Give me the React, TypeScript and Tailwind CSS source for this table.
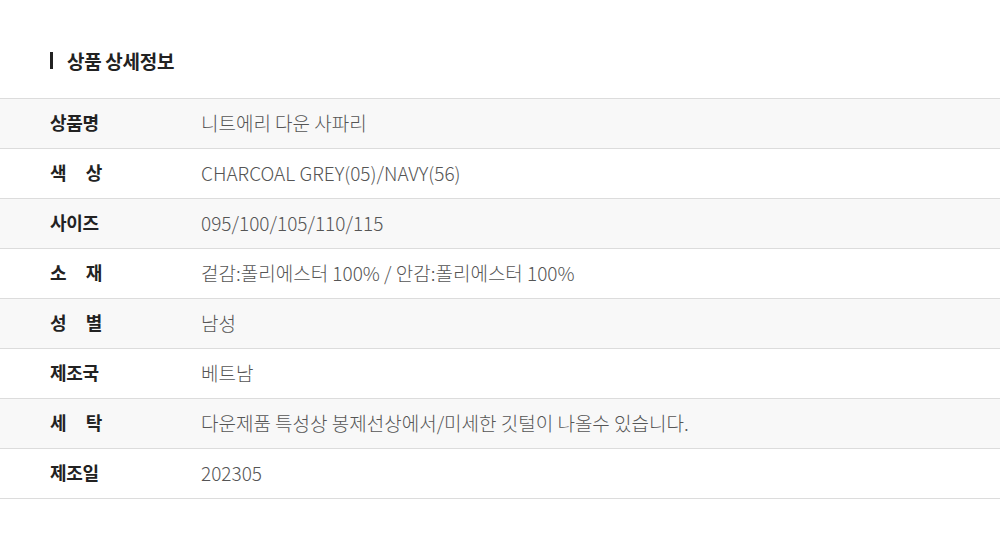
import React from "react";

const rows = [
    { label: ["상품명"], value: "니트에리 다운 사파리" },
    { label: ["색", "상"], value: "CHARCOAL GREY(05)/NAVY(56)" },
    { label: ["사이즈"], value: "095/100/105/110/115" },
    { label: ["소", "재"], value: "겉감:폴리에스터 100% / 안감:폴리에스터 100%" },
    { label: ["성", "별"], value: "남성" },
    { label: ["제조국"], value: "베트남" },
    { label: ["세", "탁"], value: "다운제품 특성상 봉제선상에서/미세한 깃털이 나올수 있습니다." },
    { label: ["제조일"], value: "202305" },
];

export default function App() {
    return (
        <div className="w-[1000px] h-[548px] bg-white font-['Noto_Sans_CJK_KR',sans-serif]">
            <div className="pl-[50px] pt-[51px] flex items-center h-[98px] box-border">
                <span className="w-[3px] h-[17px] bg-[#222] self-start mt-[1px]" />
                <h2 className="ml-[14px] self-start text-[19px] font-bold text-[#222] tracking-[-0.3px] leading-none">상품 상세정보</h2>
            </div>
            <div className="border-t border-[#dcdcdc]">
                {rows.map((r, i) => (
                    <div
                        key={i}
                        className={`flex items-center h-[50px] pb-[3px] border-b border-[#dcdcdc] box-border ${i % 2 === 0 ? "bg-[#f8f8f8]" : "bg-white"}`}
                    >
                        <div className="pl-[50px] w-[201px] shrink-0">
                            <div className="w-[52px] flex justify-between text-[18px] font-bold text-[#222] tracking-[-0.3px] leading-none">
                                {r.label.map((c, j) => (
                                    <span key={j}>{c}</span>
                                ))}
                            </div>
                        </div>
                        <div className="text-[19px] text-[#555] font-light leading-none">{r.value}</div>
                    </div>
                ))}
            </div>
        </div>
    );
}
